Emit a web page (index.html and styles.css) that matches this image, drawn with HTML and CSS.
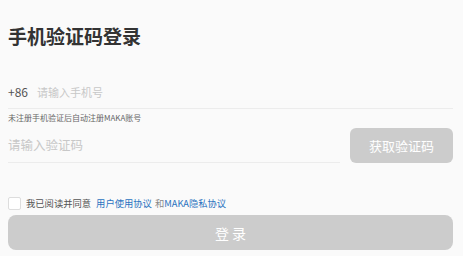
FILE: index.html
```html
<!DOCTYPE html>
<html lang="zh">
<head>
    <meta charset="UTF-8">
    <meta name="viewport" content="width=device-width, initial-scale=1.0">
    <title>手机验证码登录</title>
    <link rel="stylesheet" href="styles.css">
</head>
<body>
    <div class="strona">
        <h1 class="tytul">手机验证码登录</h1>
        <div class="wiersz telefon">
            <span class="kod">+86</span>
            <span class="podpowiedz">请输入手机号</span>
        </div>
        <p class="uwaga">未注册手机验证后自动注册MAKA账号</p>
        <div class="kodRzad">
            <div class="wiersz weryfikacja">
                <span class="podpowiedz duza">请输入验证码</span>
            </div>
            <button class="pobierz">获取验证码</button>
        </div>
        <div class="zgoda">
            <span class="kwadrat"></span>
            <span>我已阅读并同意</span>
            <a class="link odstep">用户使用协议</a>
            <span class="i">和</span><a class="link">MAKA隐私协议</a>
        </div>
        <button class="zaloguj">登 录</button>
    </div>
</body>
</html>
```
FILE: styles.css
```css
body {
    margin: 0;
    background: #fafafa;
    font-family: "Noto Sans CJK SC", "Noto Sans", sans-serif;
    color: #333;
}
.strona {
    padding: 0 10px 0 8px;
}
.tytul {
    margin: 0;
    padding-top: 22px;
    font-size: 19px;
    line-height: 28px;
    font-weight: bold;
    color: #333;
}
.wiersz {
    display: flex;
    align-items: center;
    border-bottom: 1px solid #ececec;
}
.telefon {
    margin-top: 25px;
    height: 33px;
}
.kod {
    font-size: 12px;
    color: #555;
    width: 29px;
}
.podpowiedz {
    font-size: 11px;
    color: #c8c8c8;
}
.podpowiedz.duza {
    font-size: 12.5px;
}
.uwaga {
    margin: 0;
    padding-top: 3px;
    font-size: 8px;
    line-height: 12px;
    color: #666;
}
.kodRzad {
    display: flex;
    align-items: flex-start;
    gap: 10px;
    margin-top: 2px;
}
.weryfikacja {
    flex: 0 0 332px;
    height: 36px;
}
.pobierz {
    flex: 1;
    height: 35px;
    margin-top: 2px;
    border: none;
    border-radius: 6px;
    background: #cccccc;
    color: #fff;
    font-family: inherit;
    font-size: 13px;
}
.zgoda {
    display: flex;
    align-items: center;
    margin-top: 33px;
    height: 14px;
    font-size: 9.3px;
    color: #555;
}
.kwadrat {
    width: 11px;
    height: 11px;
    border: 1px solid #ddd;
    border-radius: 2px;
    background: #fff;
    margin-right: 5px;
}
.link {
    color: #2b73c0;
}
.odstep {
    margin-left: 5px;
}
.i {
    color: #888;
    margin-left: 3px;
}
.zaloguj {
    display: block;
    width: 100%;
    height: 35px;
    margin-top: 5px;
    border: none;
    border-radius: 8px;
    background: #cccccc;
    color: #fff;
    font-family: inherit;
    font-size: 14px;
}
```
